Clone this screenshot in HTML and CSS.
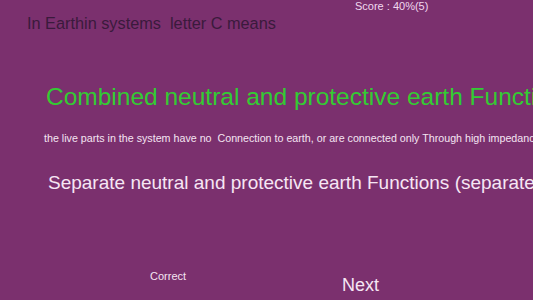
FILE: index.html
```html
<!DOCTYPE html>
<html>
<head>
<meta charset="utf-8">
<link rel="stylesheet" href="styles.css">
</head>
<body>
<div class="screen">
  <div class="score">Score : 40%(5)</div>
  <div class="question">In Earthin systems  letter C means</div>
  <div class="answer">Combined neutral and protective earth Functions</div>
  <div class="hint">the live parts in the system have no  Connection to earth, or are connected only Through high impedance</div>
  <div class="option">Separate neutral and protective earth Functions (separate conductors)</div>
  <div class="footer">
    <div class="status">Correct</div>
    <div class="next">Next</div>
  </div>
</div>
</body>
</html>
```

FILE: styles.css
```css
html, body {
  margin: 0;
  padding: 0;
  width: 533px;
  height: 300px;
  overflow: hidden;
  background: #7b306e;
}
.screen {
  width: 533px;
  height: 300px;
  display: flex;
  flex-direction: column;
  font-family: "Liberation Sans", Arial, sans-serif;
  white-space: pre;
  overflow: hidden;
}
.score {
  font-size: 11px;
  line-height: 12px;
  color: #f0d8ee;
  padding-left: 355px;
}
.question {
  font-size: 16.3px;
  line-height: 20px;
  color: #3a1a3c;
  padding-left: 27px;
  margin-top: 1px;
}
.answer {
  font-size: 24.5px;
  line-height: 28px;
  color: #33cc33;
  padding-left: 46px;
  margin-top: 50px;
}
.hint {
  font-size: 10.7px;
  line-height: 12px;
  color: #f4e4f2;
  padding-left: 44px;
  margin-top: 21px;
}
.option {
  font-size: 19px;
  line-height: 22px;
  color: #f6e6f4;
  padding-left: 48px;
  margin-top: 28px;
}
.footer {
  display: flex;
  align-items: flex-start;
  margin-top: 75px;
}
.status {
  font-size: 11px;
  line-height: 14px;
  color: #f4e4f2;
  margin-left: 150px;
}
.next {
  font-size: 18px;
  line-height: 22px;
  color: #f6e6f4;
  margin-left: 156px;
  margin-top: 5px;
}
```
